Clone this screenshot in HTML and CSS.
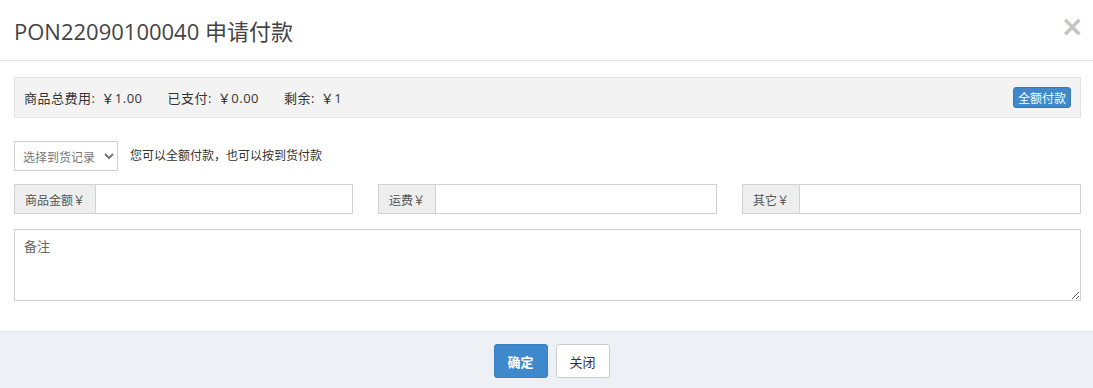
FILE: index.html
```html
<!DOCTYPE html>
<html lang="zh-CN">
<head>
  <meta charset="UTF-8" />
  <title>申请付款</title>
  <link rel="stylesheet" href="styles.css">
</head>
<body>
  <div class="modal">
    <div class="modal-header">
      <h4 class="modal-title">PON22090100040 申请付款</h4>
      <span class="close">&times;</span>
    </div>

    <div class="modal-body">
      <div class="resumen">
        <span>商品总费用: ￥1.00</span>
        <span>已支付: ￥0.00</span>
        <span>剩余: ￥1</span>
        <button type="button" class="btn-full">全额付款</button>
      </div>

      <div class="fila-select">
        <select class="sel-registro">
          <option>选择到货记录</option>
        </select>
        <span class="ayuda">您可以全额付款，也可以按到货付款</span>
      </div>

      <div class="montos">
        <div class="grupo">
          <span class="addon">商品金额￥</span>
          <input type="text">
        </div>
        <div class="grupo">
          <span class="addon">运费￥</span>
          <input type="text">
        </div>
        <div class="grupo">
          <span class="addon">其它￥</span>
          <input type="text">
        </div>
      </div>

      <textarea class="nota" placeholder="备注"></textarea>
    </div>

    <div class="modal-footer">
      <button type="button" class="btn btn-ok">确定</button>
      <button type="button" class="btn btn-close">关闭</button>
    </div>
  </div>
</body>
</html>
```

FILE: styles.css
```css
body {
  margin: 0;
  background: #fff;
  font-family: "Open Sans", "Noto Sans CJK SC", sans-serif;
  color: #333;
}

.modal {
  width: 1093px;
  height: 388px;
  display: flex;
  flex-direction: column;
}

.modal-header {
  height: 61px;
  box-sizing: border-box;
  border-bottom: 1px solid #e5e5e5;
  padding: 0 9px 0 14px;
  display: flex;
  align-items: center;
  justify-content: space-between;
}

.modal-title {
  margin: 0;
  font-size: 22px;
  font-weight: normal;
  color: #444;
}

.close {
  font-family: "DejaVu Sans", sans-serif;
  font-size: 28px;
  font-weight: bold;
  color: #c4c4c4;
  line-height: 1;
  margin-top: -6px;
}

.modal-body {
  padding: 16px 12px 0 14px;
  flex: 1;
}

.resumen {
  height: 41px;
  box-sizing: border-box;
  background: #f3f3f3;
  border: 1px solid #e3e3e3;
  padding: 0 9px 0 9px;
  display: flex;
  align-items: center;
  font-size: 13px;
  color: #333;
}

.resumen span {
  margin-right: 25px;
  letter-spacing: 0.5px;
  word-spacing: 2px;
}

.btn-full {
  margin-left: auto;
  height: 21px;
  padding: 0 4px;
  border: 1px solid #3579b8;
  border-radius: 3px;
  background: #3e89cb;
  color: #fff;
  font-family: "Noto Sans CJK SC", sans-serif;
  font-size: 12px;
  line-height: 1;
}

.fila-select {
  margin-top: 23px;
  display: flex;
  align-items: center;
}

.sel-registro {
  width: 104px;
  height: 30px;
  border: 1px solid #d2d2d2;
  background: #fff;
  color: #777;
  font-family: "Noto Sans CJK SC", sans-serif;
  font-size: 12px;
  padding: 0 2px 0 4px;
}

.ayuda {
  margin-left: 12px;
  font-size: 12px;
  color: #333;
  margin-top: -2px;
}

.montos {
  margin-top: 13px;
  display: grid;
  grid-template-columns: repeat(3, 1fr);
  column-gap: 25px;
}

.grupo {
  display: flex;
  height: 30px;
}

.addon {
  display: flex;
  align-items: center;
  padding: 0 10px;
  background: #eee;
  border: 1px solid #d2d2d2;
  border-right: none;
  font-family: "Noto Sans CJK SC", sans-serif;
  font-size: 12px;
  color: #555;
}

.grupo input {
  flex: 1;
  min-width: 0;
  border: 1px solid #d2d2d2;
  padding: 0 8px;
  font-family: inherit;
  font-size: 12px;
}

.nota {
  display: block;
  margin-top: 15px;
  width: 100%;
  height: 72px;
  box-sizing: border-box;
  border: 1px solid #d2d2d2;
  padding: 6px 9px;
  font-family: "Noto Sans CJK SC", sans-serif;
  font-size: 13px;
}

.nota::placeholder {
  color: #666;
}

.modal-footer {
  height: 57px;
  box-sizing: border-box;
  border-top: 1px solid #e2e6ea;
  background: #edf1f5;
  display: flex;
  justify-content: center;
  padding: 12px 0 0 10px;
  gap: 8px;
}

.btn {
  height: 34px;
  width: 54px;
  border-radius: 3px;
  font-family: "Noto Sans CJK SC", sans-serif;
  font-size: 13px;
  padding: 0;
}

.btn-ok {
  background: #3e89cb;
  border: 1px solid #3a80c0;
  color: #fff;
  font-weight: bold;
}

.btn-close {
  background: #fff;
  border: 1px solid #ccc;
  color: #333;
}
```
